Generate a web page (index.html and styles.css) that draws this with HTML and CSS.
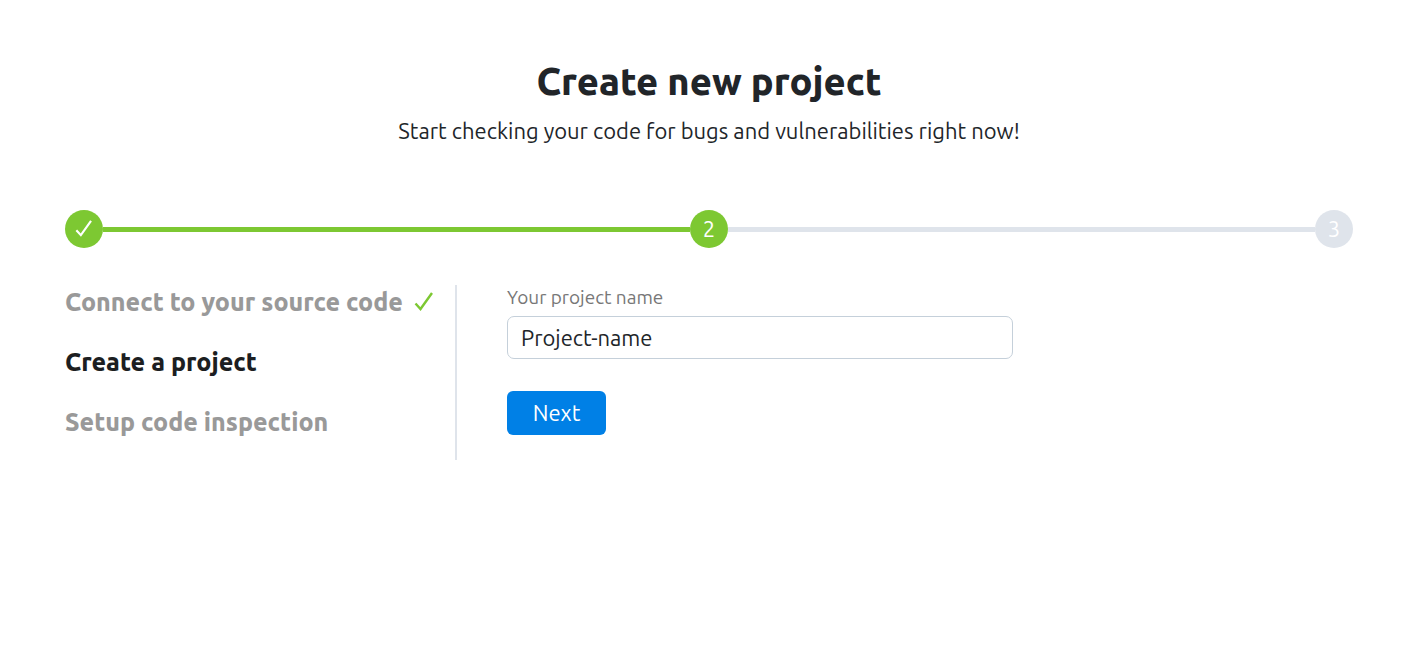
FILE: index.html
```
<!DOCTYPE html>
<html lang="en">
<head>
<meta charset="utf-8">
<meta name="viewport" content="width=device-width, initial-scale=1">
<title>Create new project</title>
<link rel="stylesheet" href="styles.css">
</head>
<body>
<main class="page">
  <header class="intro">
    <h1 class="title">Create new project</h1>
    <p class="subtitle">Start checking your code for bugs and vulnerabilities right now!</p>
  </header>

  <div class="progress">
    <span class="dot dot-done">
      <svg class="check" viewBox="0 0 20 20" role="img" aria-label="Done"><path d="M1.5 11.5 6.5 16.8 17.8 1"/></svg>
    </span>
    <span class="bar bar-done"></span>
    <span class="dot dot-done">2</span>
    <span class="bar"></span>
    <span class="dot">3</span>
  </div>

  <div class="content">
    <ol class="steps">
      <li class="step">Connect to your source code
        <svg class="check check-green" viewBox="0 0 20 20" aria-hidden="true"><path d="M1.5 11.5 6.5 17 18 1"/></svg>
      </li>
      <li class="step step-current" aria-current="step">Create a project</li>
      <li class="step">Setup code inspection</li>
    </ol>
    <form class="form">
      <label class="label" for="project-name">Your project name</label>
      <input class="field" id="project-name" type="text" value="Project-name">
      <button class="button" type="button">Next</button>
    </form>
  </div>
</main>
</body>
</html>
```
FILE: styles.css
```
* {
  box-sizing: border-box;
}

body {
  margin: 0;
  background: #fff;
  color: #212529;
  font-family: Ubuntu, "Noto Sans", sans-serif;
  font-size: 22px;
}

.page {
  padding: 57px 59px 58px 65px;
}

.intro {
  text-align: center;
}

.title {
  margin: 0;
  font-size: 38px;
  font-weight: 800;
  line-height: 48px;
}

.subtitle {
  margin: 9px 0 0;
  line-height: 34px;
}

.progress {
  display: flex;
  align-items: center;
  margin-top: 62px;
}

.dot {
  display: flex;
  flex: none;
  align-items: center;
  justify-content: center;
  width: 38px;
  height: 38px;
  border-radius: 50%;
  background: #dfe4eb;
  color: #fff;
  line-height: 24px;
}

.dot-done {
  background: #7dc832;
}

.bar {
  flex: 1;
  height: 5px;
  background: #dfe4eb;
}

.bar-done {
  background: #7dc832;
}

.check {
  width: 18px;
  height: 18px;
  fill: none;
  stroke: #fff;
  stroke-width: 2.4;
}

.check-green {
  width: 20px;
  height: 20px;
  stroke: #7dc832;
}

.content {
  display: flex;
  margin-top: 37px;
}

.steps {
  display: flex;
  flex: none;
  flex-direction: column;
  gap: 26px;
  width: 392px;
  margin: 0;
  padding: 0 0 21px;
  border-right: 2px solid #dfe4eb;
  list-style: none;
}

.step {
  display: flex;
  align-items: center;
  gap: 11px;
  color: #999;
  font-size: 25px;
  font-weight: 800;
  line-height: 34px;
  white-space: nowrap;
}

.step-current {
  color: #1c1e21;
}

.form {
  display: flex;
  flex: 1;
  flex-direction: column;
  align-items: flex-start;
  max-width: 556px;
  padding-left: 50px;
}

.label {
  margin-bottom: 7px;
  color: #777;
  font-size: 19px;
  line-height: 24px;
}

.field {
  width: 100%;
  height: 43px;
  padding: 0 13px;
  border: 1px solid #c5d0da;
  border-radius: 7px;
  background: #fff;
  color: #212529;
  font: inherit;
}

.button {
  min-width: 99px;
  height: 44px;
  margin-top: 32px;
  padding: 0 24px 2px;
  border: 0;
  border-radius: 6px;
  background: #0080e6;
  color: #fff;
  font: inherit;
}
```
